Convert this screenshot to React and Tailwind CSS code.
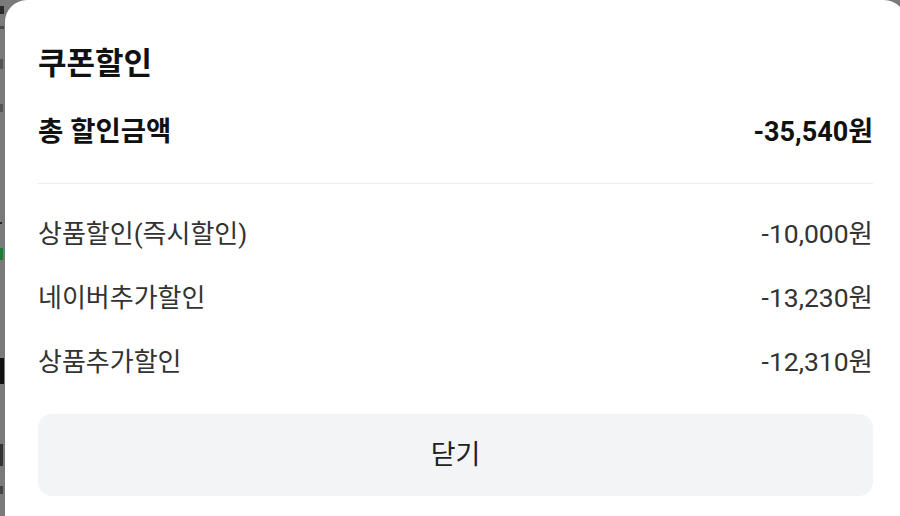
const rows = [
  { label: "상품할인(즉시할인)", value: "-10,000원" },
  { label: "네이버추가할인", value: "-13,230원" },
  { label: "상품추가할인", value: "-12,310원" },
];

export default function App() {
  return (
    <div
      className="flex h-[516px] w-[900px] overflow-hidden bg-[#7a7a7a]"
      style={{ fontFamily: 'Roboto, "Noto Sans CJK KR", sans-serif' }}
    >
      {/* dimmed page behind the sheet */}
      <div className="flex w-[5px] shrink-0 flex-col">
        <div className="mt-[6px] h-[8px] w-[4px] bg-[#2a2a2a]" />
        <div className="mt-[12px] h-[3px] w-[4px] bg-[#4a4a4a]" />
        <div className="mt-[30px] h-[10px] w-[3px] bg-[#555]" />
        <div className="mt-[35px] h-[8px] w-[3px] bg-[#555]" />
        <div className="mt-[110px] h-[2px] w-[2px] bg-[#222]" />
        <div className="mt-[24px] h-[12px] w-[3px] bg-[#1f7a35]" />
        <div className="mt-[98px] h-[26px] w-[4px] bg-[#111]" />
        <div className="mt-[60px] h-[22px] w-[3px] bg-[#333]" />
        <div className="mt-[20px] h-[8px] w-[3px] bg-[#444]" />
      </div>

      <div className="w-[901px] shrink-0 rounded-t-[22px] bg-white px-[33px] pt-[46px]">
        <h1 className="text-[31px] font-bold leading-[36px] text-[#111]">쿠폰할인</h1>

        <div className="mt-[32px] flex items-center justify-between leading-[36px] text-[#111]">
          <span className="text-[27.5px] font-bold">총 할인금액</span>
          <span className="text-[27px] font-bold">-35,540원</span>
        </div>

        <div className="mt-[33px] h-px bg-[#ececec]" />

        <div className="mt-[18px]">
          {rows.map((r) => (
            <div key={r.label} className="flex h-[64px] items-center justify-between text-[26px] text-[#333]">
              <span>{r.label}</span>
              <span className="text-[26.5px]">{r.value}</span>
            </div>
          ))}
        </div>

        <button
          type="button"
          className="mt-[20px] flex h-[82px] w-full items-center justify-center rounded-[14px] bg-[#f3f4f6] text-[27px] text-[#222]"
        >
          닫기
        </button>
      </div>
    </div>
  );
}
